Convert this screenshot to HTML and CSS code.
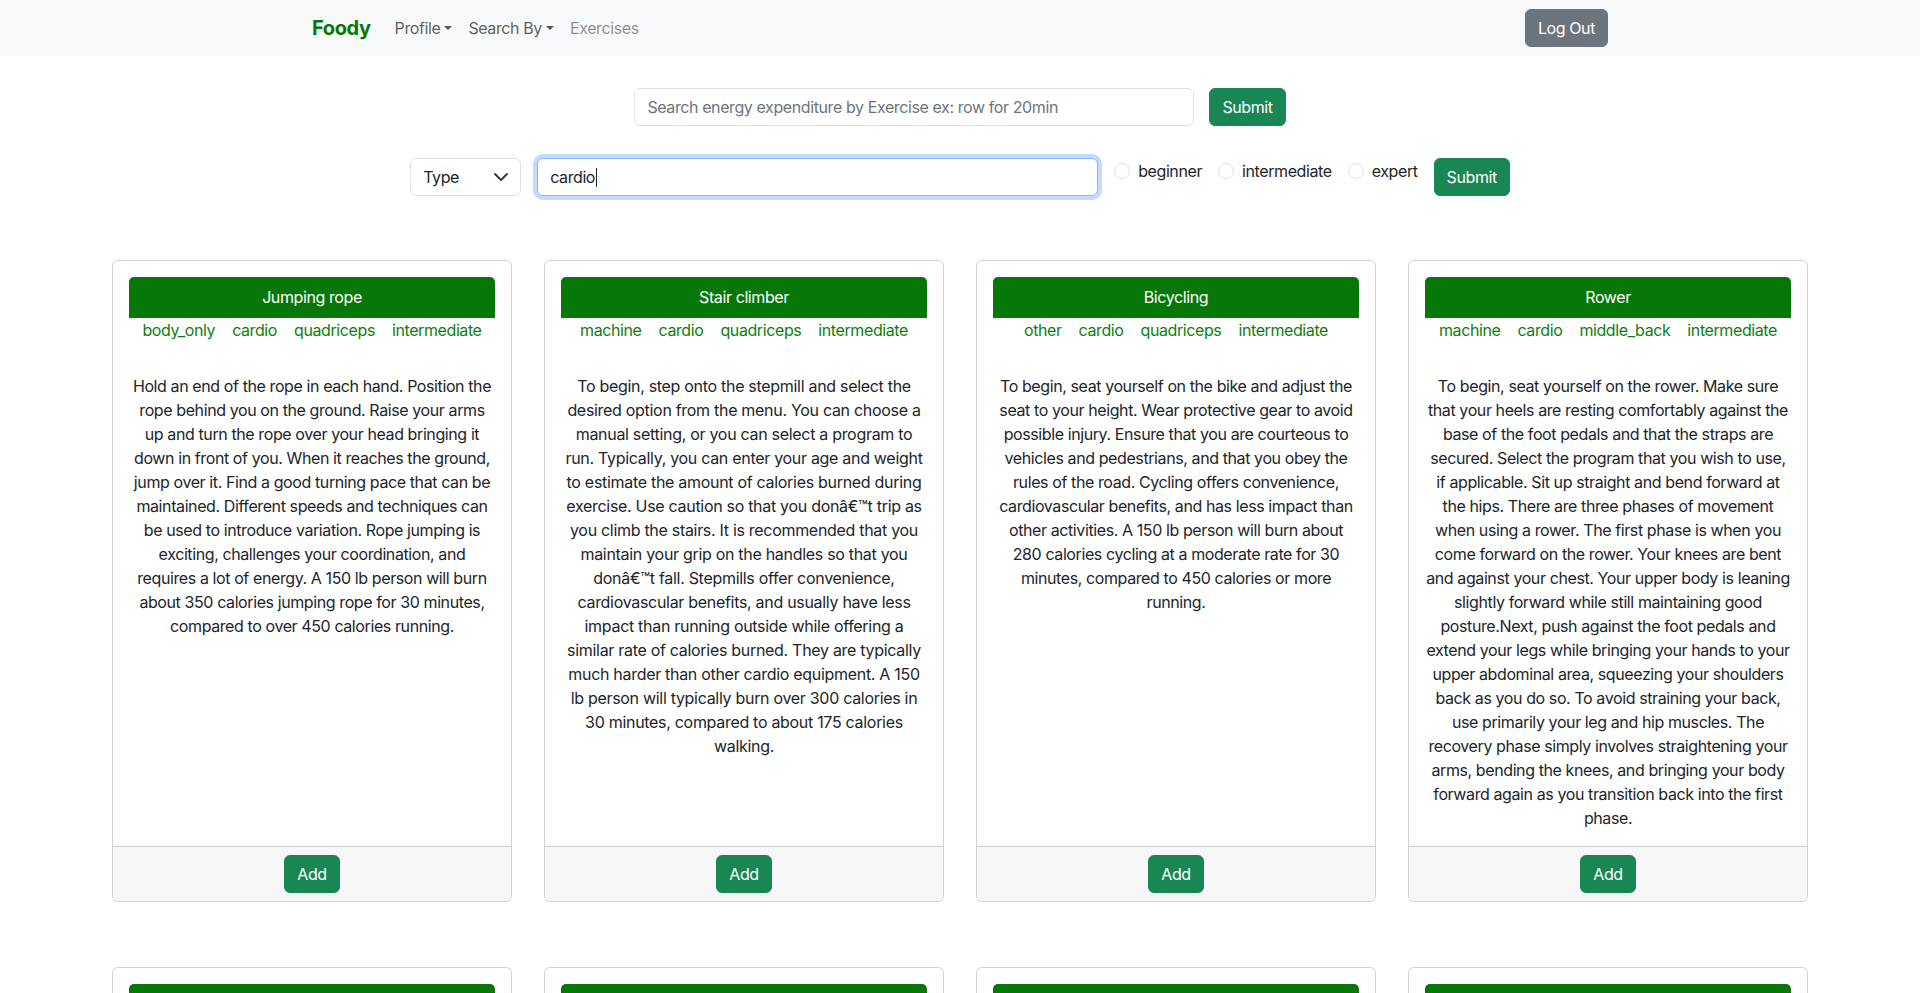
FILE: index.html
```html
<!DOCTYPE html>
<html lang="en">
<head>
<meta charset="utf-8">
<title>Foody - Exercises</title>
<link rel="stylesheet" href="styles.css">
</head>
<body>
<nav class="navbar">
  <div class="nav-container">
    <div class="nav-left">
      <a class="brand" href="#">Foody</a>
      <ul class="nav-links">
        <li><a class="nav-link dropdown" href="#">Profile</a></li>
        <li><a class="nav-link dropdown" href="#">Search By</a></li>
        <li><a class="nav-link muted" href="#">Exercises</a></li>
      </ul>
    </div>
    <button class="btn btn-secondary" type="button">Log Out</button>
  </div>
</nav>

<main class="main">
  <form class="search-row first-row">
    <input class="form-control energy-input" type="text" placeholder="Search energy expenditure by Exercise ex: row for 20min">
    <button class="btn btn-success" type="button">Submit</button>
  </form>

  <form class="search-row second-row">
    <div class="select-wrap">
      <select class="form-select">
        <option>Type</option>
      </select>
      <svg class="chevron" width="16" height="16" viewBox="0 0 16 16" aria-hidden="true"><path d="M2 5l6 6 6-6" fill="none" stroke="#343a40" stroke-width="2" stroke-linecap="round" stroke-linejoin="round"/></svg>
    </div>
    <div class="input-wrap">
      <input class="form-control type-input focused" type="text" value="cardio">
      <span class="caret"></span>
    </div>
    <label class="form-check"><input class="radio" type="radio" name="lvl"><span>beginner</span></label>
    <label class="form-check"><input class="radio" type="radio" name="lvl"><span>intermediate</span></label>
    <label class="form-check"><input class="radio" type="radio" name="lvl"><span>expert</span></label>
    <button class="btn btn-success" type="button">Submit</button>
  </form>

  <section class="cards">
    <div class="card">
      <div class="card-body">
        <div class="card-header">Jumping rope</div>
        <div class="tags"><span>body_only</span><span>cardio</span><span>quadriceps</span><span>intermediate</span></div>
        <p class="desc">Hold an end of the rope in each hand. Position the rope behind you on the ground. Raise your arms up and turn the rope over your head bringing it down in front of you. When it reaches the ground, jump over it. Find a good turning pace that can be maintained. Different speeds and techniques can be used to introduce variation. Rope jumping is exciting, challenges your coordination, and requires a lot of energy. A 150 lb person will burn about 350 calories jumping rope for 30 minutes, compared to over 450 calories running.</p>
      </div>
      <div class="card-footer"><button class="btn btn-success" type="button">Add</button></div>
    </div>

    <div class="card">
      <div class="card-body">
        <div class="card-header">Stair climber</div>
        <div class="tags"><span>machine</span><span>cardio</span><span>quadriceps</span><span>intermediate</span></div>
        <p class="desc desc-loose">To begin, step onto the stepmill and select the desired option from the menu. You can choose a manual setting, or you can select a program to run. Typically, you can enter your age and weight to estimate the amount of calories burned during exercise. Use caution so that you donâ€™t trip as you climb the stairs. It is recommended that you maintain your grip on the handles so that you donâ€™t fall. Stepmills offer convenience, cardiovascular benefits, and usually have less impact than running outside while offering a similar rate of calories burned. They are typically much harder than other cardio equipment. A 150 lb person will typically burn over 300 calories in 30 minutes, compared to about 175 calories walking.</p>
      </div>
      <div class="card-footer"><button class="btn btn-success" type="button">Add</button></div>
    </div>

    <div class="card">
      <div class="card-body">
        <div class="card-header">Bicycling</div>
        <div class="tags"><span>other</span><span>cardio</span><span>quadriceps</span><span>intermediate</span></div>
        <p class="desc">To begin, seat yourself on the bike and adjust the seat to your height. Wear protective gear to avoid possible injury. Ensure that you are courteous to vehicles and pedestrians, and that you obey the rules of the road. Cycling offers convenience, cardiovascular benefits, and has less impact than other activities. A 150 lb person will burn about 280 calories cycling at a moderate rate for 30 minutes, compared to 450 calories or more running.</p>
      </div>
      <div class="card-footer"><button class="btn btn-success" type="button">Add</button></div>
    </div>

    <div class="card">
      <div class="card-body">
        <div class="card-header">Rower</div>
        <div class="tags"><span>machine</span><span>cardio</span><span>middle_back</span><span>intermediate</span></div>
        <p class="desc">To begin, seat yourself on the rower. Make sure that your heels are resting comfortably against the base of the foot pedals and that the straps are secured. Select the program that you wish to use, if applicable. Sit up straight and bend forward at the hips. There are three phases of movement when using a rower. The first phase is when you come forward on the rower. Your knees are bent and against your chest. Your upper body is leaning slightly forward while still maintaining good posture.Next, push against the foot pedals and extend your legs while bringing your hands to your upper abdominal area, squeezing your shoulders back as you do so. To avoid straining your back, use primarily your leg and hip muscles. The recovery phase simply involves straightening your arms, bending the knees, and bringing your body forward again as you transition back into the first phase.</p>
      </div>
      <div class="card-footer"><button class="btn btn-success" type="button">Add</button></div>
    </div>

    <div class="card">
      <div class="card-body">
        <div class="card-header">Elliptical trainer</div>
        <div class="tags"><span>machine</span><span>cardio</span><span>quadriceps</span><span>intermediate</span></div>
        <p class="desc">To begin, step onto the elliptical and select the desired option from the menu.</p>
      </div>
      <div class="card-footer"><button class="btn btn-success" type="button">Add</button></div>
    </div>
    <div class="card">
      <div class="card-body">
        <div class="card-header">Running, Treadmill</div>
        <div class="tags"><span>machine</span><span>cardio</span><span>quadriceps</span><span>intermediate</span></div>
        <p class="desc">To begin, step onto the treadmill and select the desired option from the menu.</p>
      </div>
      <div class="card-footer"><button class="btn btn-success" type="button">Add</button></div>
    </div>
    <div class="card">
      <div class="card-body">
        <div class="card-header">Recumbent bike</div>
        <div class="tags"><span>machine</span><span>cardio</span><span>quadriceps</span><span>intermediate</span></div>
        <p class="desc">To begin, seat yourself on the bike and adjust the seat to your height.</p>
      </div>
      <div class="card-footer"><button class="btn btn-success" type="button">Add</button></div>
    </div>
    <div class="card">
      <div class="card-body">
        <div class="card-header">Step mill</div>
        <div class="tags"><span>machine</span><span>cardio</span><span>quadriceps</span><span>intermediate</span></div>
        <p class="desc">To begin, step onto the stepmill and select the desired option from the menu.</p>
      </div>
      <div class="card-footer"><button class="btn btn-success" type="button">Add</button></div>
    </div>
  </section>
</main>
</body>
</html>
```

FILE: styles.css
```css
* { box-sizing: border-box; }

body {
  margin: 0;
  font-family: Inter, "Noto Sans", "Liberation Sans", sans-serif;
  font-size: 16px;
  line-height: 1.5;
  letter-spacing: -0.4px;
  color: #212529;
  background: #fff;
}

a { text-decoration: none; }

/* Navbar */
.navbar {
  background: #f8f9fa;
  padding: 8px 0;
}
.nav-container {
  width: 1320px;
  margin: 0 auto;
  padding: 0 12px;
  display: flex;
  align-items: center;
  justify-content: space-between;
}
.nav-left {
  display: flex;
  align-items: center;
}
.brand {
  font-size: 20px;
  font-weight: 700;
  color: #077807;
  margin-right: 16px;
  line-height: 30px;
  padding: 5px 0;
}
.nav-links {
  display: flex;
  list-style: none;
  margin: 0;
  padding: 0;
}
.nav-link {
  display: block;
  padding: 8px;
  color: rgba(0, 0, 0, 0.65);
}
.nav-link.muted { color: rgba(0, 0, 0, 0.45); }
.nav-link.dropdown::after {
  content: "";
  display: inline-block;
  margin-left: 0.255em;
  vertical-align: 0.255em;
  border-top: 0.3em solid;
  border-right: 0.3em solid transparent;
  border-left: 0.3em solid transparent;
}

/* Buttons */
.btn {
  font-family: inherit;
  font-size: 16px;
  line-height: 24px;
  letter-spacing: inherit;
  padding: 6px 12px;
  border: 1px solid transparent;
  border-radius: 6px;
  color: #fff;
  cursor: pointer;
}
.btn-secondary { background: #6c757d; border-color: #6c757d; }
.btn-success { background: #198754; border-color: #198754; }

/* Search forms */
.main { padding-top: 32px; }
.search-row {
  display: flex;
  justify-content: center;
  align-items: flex-start;
  margin: 0;
}
.first-row { gap: 15px; }
.second-row { margin-top: 32px; }

.form-control {
  font-family: inherit;
  font-size: 16px;
  line-height: 24px;
  letter-spacing: inherit;
  height: 38px;
  padding: 6px 12px;
  color: #212529;
  background: #fff;
  border: 1px solid #dee2e6;
  border-radius: 6px;
  outline: none;
}
.form-control::placeholder { color: #6c757d; }
.energy-input { width: 560px; }
.input-wrap {
  position: relative;
  margin-right: 16px;
}
.type-input { width: 561px; display: block; }
.form-control.focused {
  border-color: #86b7fe;
  box-shadow: 0 0 0 4px rgba(13, 110, 253, 0.25);
}
.caret {
  position: absolute;
  left: 59px;
  top: 10px;
  width: 1px;
  height: 19px;
  background: #212529;
}

.select-wrap {
  position: relative;
  width: 111px;
  margin-right: 16px;
}
.form-select {
  appearance: none;
  -webkit-appearance: none;
  width: 100%;
  height: 38px;
  font-family: inherit;
  font-size: 16px;
  line-height: 24px;
  letter-spacing: inherit;
  padding: 6px 36px 6px 12px;
  color: #212529;
  background: #fff;
  border: 1px solid #dee2e6;
  border-radius: 6px;
  outline: none;
}
.chevron {
  position: absolute;
  right: 12px;
  top: 11px;
  pointer-events: none;
}

.form-check {
  display: flex;
  align-items: flex-start;
  margin-right: 16px;
  padding-top: 1px;
  line-height: 24px;
}
.radio {
  appearance: none;
  -webkit-appearance: none;
  width: 16px;
  height: 16px;
  margin: 4px 8px 0 0;
  border: 1px solid #dee2e6;
  border-radius: 50%;
  background: #fff;
  flex-shrink: 0;
}

/* Cards */
.cards {
  width: 1696px;
  margin: 64px auto 0;
  display: grid;
  grid-template-columns: repeat(4, 400px);
  column-gap: 32px;
  row-gap: 65px;
  padding-bottom: 48px;
}
.card {
  display: flex;
  flex-direction: column;
  border: 1px solid rgba(0, 0, 0, 0.175);
  border-radius: 6px;
  background: #fff;
  overflow: hidden;
}
.card-body {
  flex: 1;
  padding: 16px;
}
.card-header {
  background: #077807;
  color: #fff;
  text-align: center;
  padding: 8px 16px 9px;
  border-radius: 5px 5px 0 0;
}
.tags {
  display: flex;
  justify-content: center;
  gap: 17px;
  color: #0e7f0e;
}
.desc {
  margin: 32px 0 0;
  text-align: center;
}
.desc-loose {
  letter-spacing: -0.3px;
}
.card-footer {
  padding: 8px 16px;
  background: #f7f7f7;
  border-top: 1px solid rgba(0, 0, 0, 0.175);
  text-align: center;
}
```
